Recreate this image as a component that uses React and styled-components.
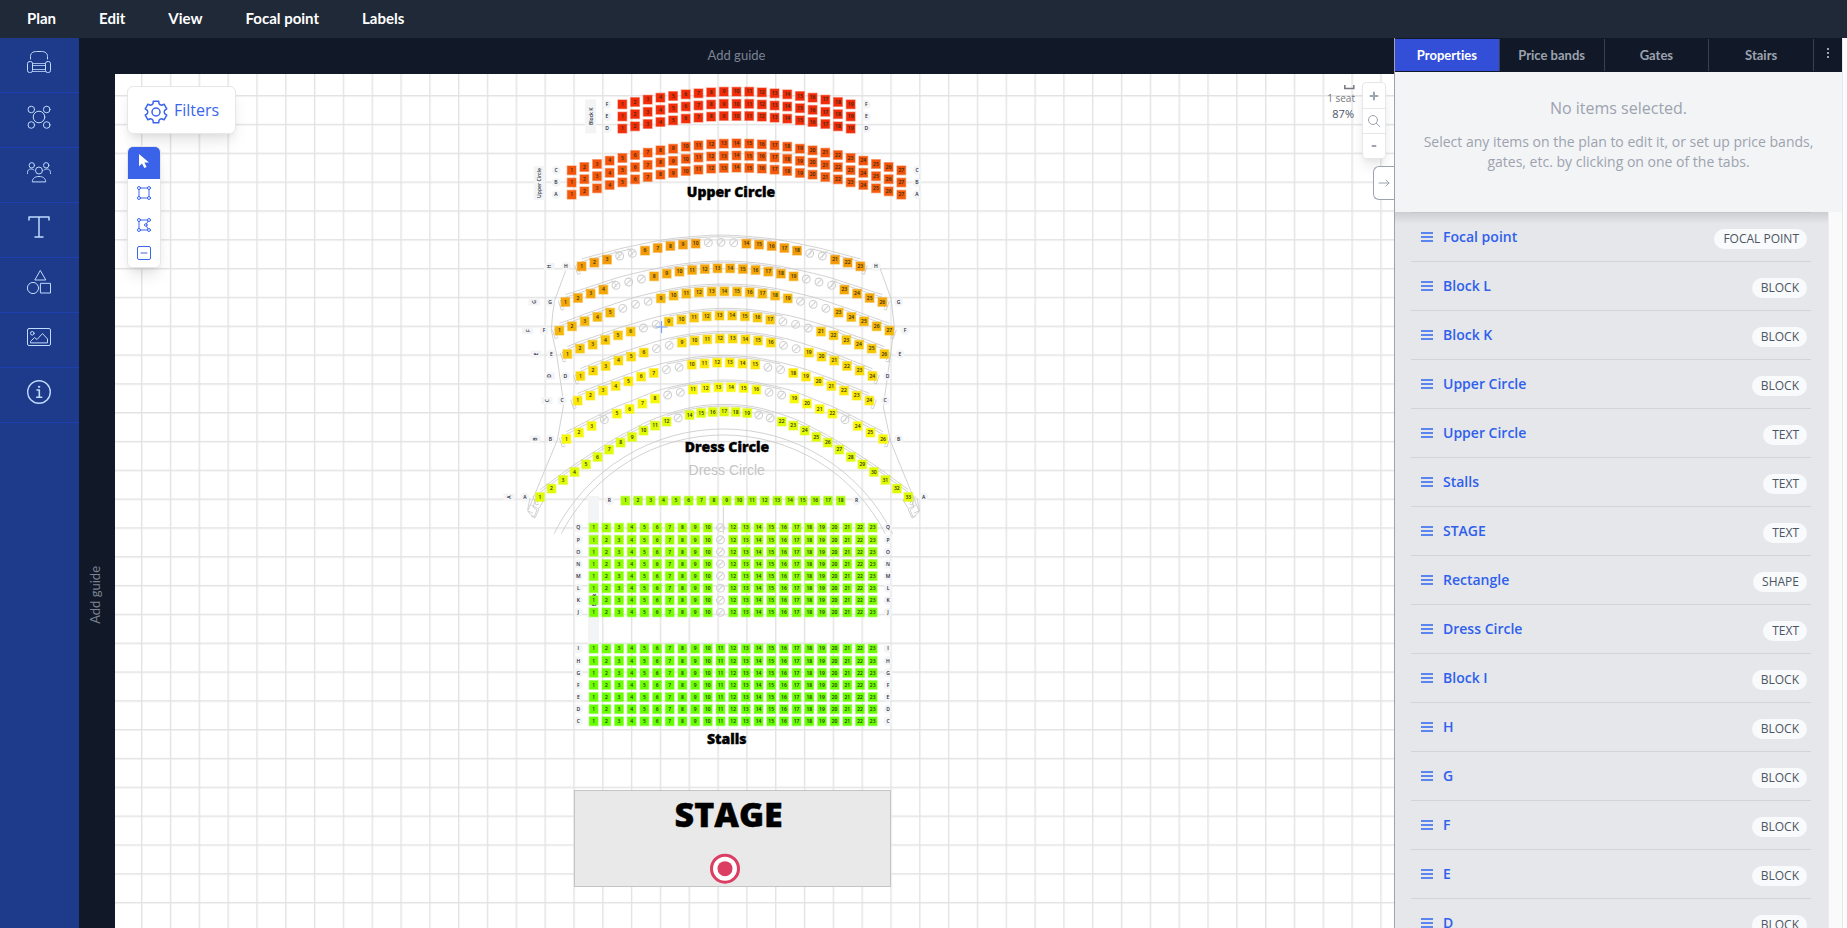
import React from "react";
import styled, { createGlobalStyle } from "styled-components";

const UI = `"Open Sans", "Noto Sans", sans-serif`;
const ROUND = `Lato, "Open Sans", sans-serif`;

const GlobalStyle = createGlobalStyle`
  *, *::before, *::after { box-sizing: border-box; }
  body { margin: 0; font-family: ${UI}; color: #4b5563; background: #fafafa; overflow: hidden; }
  button { font: inherit; color: inherit; background: none; border: 0; padding: 0; margin: 0; cursor: pointer; }
  ul, h2, p { margin: 0; padding: 0; list-style: none; }
  svg { display: block; }
`;

const Shell = styled.div`
  display: flex;
  flex-direction: column;
  height: 100vh;
`;

const MenuBar = styled.nav`
  display: flex;
  flex: none;
  height: 38px;
  padding: 0 5px;
  background: #1f2937;
`;

const MenuItem = styled.button`
  && {
    padding: 0 21px 2px 22px;
    font: 700 15px/20px ${ROUND};
    color: #fff;
  }
`;

const Body = styled.div`
  display: flex;
  flex: 1;
  min-height: 0;
`;

const Sidebar = styled.aside`
  flex: none;
  width: 79px;
  background: #1e3a8a;
`;

const SideTool = styled.button`
  && {
    display: flex;
    justify-content: center;
    align-items: flex-start;
    width: 100%;
    height: 55px;
    padding: 12px 1px 0 0;
    border-bottom: 1px solid #1e40af;
    color: #bfdbfe;
  }
`;

const Workspace = styled.main`
  display: flex;
  flex-direction: column;
  flex: 1;
  min-width: 0;
  background: #111827;
`;

const GuideTop = styled.button`
  && {
    flex: none;
    height: 36px;
    padding-bottom: 2px;
    font: 400 13px/16px ${ROUND};
    color: #7b8494;
  }
`;

const WorkRow = styled.div`
  display: flex;
  flex: 1;
  min-height: 0;
`;

const GuideLeft = styled.button`
  && {
    flex: none;
    width: 36px;
    padding: 190px 4px 0 0;
    font: 400 13px/16px ${ROUND};
    color: #7b8494;
    text-align: center;
  }
`;

const Vertical = styled.span`
  display: inline-block;
  writing-mode: vertical-rl;
  rotate: 180deg;
`;

const Canvas = styled.section`
  position: relative;
  flex: 1;
  min-width: 0;
  overflow: hidden;
  background: #fff;
`;

const PlanDrawing = styled.svg`
  width: 100%;
  height: 100%;
`;

const shadow = `0 10px 15px -3px rgba(0,0,0,.1), 0 4px 6px -2px rgba(0,0,0,.05)`;

const CanvasTools = styled.div`
  position: absolute;
  top: 12px;
  left: 12px;
  display: flex;
  flex-direction: column;
  align-items: flex-start;
  gap: 12px;
`;

const FilterButton = styled.button`
  && {
    display: flex;
    align-items: center;
    gap: 6px;
    width: 109px;
    height: 48px;
    padding-left: 16px;
    border: 1px solid #e5e7eb;
    border-radius: 6px;
    background: #fff;
    box-shadow: ${shadow};
    font-size: 16px;
    line-height: 24px;
    color: #3b66ea;
  }
  svg { margin-top: 3px; }
`;

const ToolStack = styled.div`
  display: flex;
  flex-direction: column;
  width: 34px;
  overflow: hidden;
  border: 1px solid #e5e7eb;
  border-radius: 6px;
  background: #fff;
  box-shadow: ${shadow};
`;

const ToolButton = styled.button`
  && {
    display: flex;
    justify-content: center;
    align-items: flex-start;
    height: ${(p) => (p.$compact ? 24 : 32)}px;
    padding-top: ${(p) => (p.$compact ? 3 : 7)}px;
    background: ${(p) => (p.$active ? "#3b63ea" : "#fff")};
    color: ${(p) => (p.$active ? "#fff" : "#3b66ea")};
  }
`;

const ViewTools = styled.div`
  position: absolute;
  top: 8px;
  right: 8px;
  display: flex;
  align-items: flex-start;
  gap: 7px;
`;

const Scale = styled.div`
  display: flex;
  flex-direction: column;
  align-items: flex-end;
  padding-top: 3px;
  color: #75787e;
  font-size: 10px;
  line-height: 16px;
  strong { font-size: 11px; font-weight: 500; color: #4b5563; line-height: 16px; padding-right: 1px; }
`;

const ZoomStack = styled.div`
  display: flex;
  flex-direction: column;
  width: 24px;
  border: 1px solid #e5e7eb;
  border-radius: 4px;
  background: #fff;
  box-shadow: ${shadow};
`;

const ZoomButton = styled.button`
  && {
    display: flex;
    align-items: center;
    justify-content: center;
    height: 25px;
    color: #9ca3af;
  }
  & + & { border-top: 1px solid #e5e7eb; }
`;

const CollapseButton = styled.button`
  && {
    position: absolute;
    top: 92px;
    right: 0;
    display: flex;
    align-items: center;
    justify-content: center;
    width: 21px;
    height: 34px;
    border: 1px solid #9ca3af;
    border-right: 0;
    border-radius: 6px 0 0 6px;
    background: #fff;
    color: #9ca3af;
  }
`;

const Panel = styled.aside`
  display: flex;
  flex: none;
  width: 453px;
  border-left: 1px solid #9ca3af;
  background: #fafafa;
`;

const PanelMain = styled.div`
  display: flex;
  flex-direction: column;
  flex: 1;
  min-width: 0;
`;

const PanelEdge = styled.div`
  flex: none;
  width: 5px;
  border-left: 1px solid #e5e7eb;
  background: #fdfdfd;
`;

const Tabs = styled.div`
  display: grid;
  grid-template-columns: repeat(4, 1fr) 28px;
  flex: none;
  height: 34px;
  padding: 1px 0;
  background: #111827;
`;

const Tab = styled.button`
  && {
    display: flex;
    align-items: center;
    justify-content: center;
    padding-bottom: 1px;
    border-right: 1px solid #374151;
    background: ${(p) => (p.$active ? "#334fd8" : "transparent")};
    color: ${(p) => (p.$active ? "#fff" : "#9ca3af")};
    font: 700 13px/20px ${ROUND};
    font-variant-ligatures: none;
  }
  &&:last-child { border-right: 0; padding: 0 1px 4px 0; }
`;

const Notice = styled.div`
  position: relative;
  z-index: 1;
  flex: none;
  height: 140px;
  padding: 24px 20px 0;
  background: #f3f4f6;
  color: #9ca3af;
  text-align: center;
  h2 { font-size: 16px; line-height: 24px; font-weight: 400; margin-bottom: 12px; }
  p { font-size: 14px; line-height: 20px; }
`;

const ListArea = styled.div`
  display: flex;
  flex: 1;
  min-height: 0;
`;

const ListScroll = styled.div`
  flex: 1;
  min-width: 0;
  overflow: hidden;
  padding: 0 17px 0 16px;
  background: linear-gradient(rgba(0,0,0,.11), rgba(0,0,0,0) 12px), #e5e7eb;
`;

const ScrollTrack = styled.div`
  flex: none;
  width: 14px;
  border-left: 1px solid #ececec;
  background: #fafafa;
`;

const ItemList = styled.ul`
  border-top: 1px solid #c3c6cc;
`;

const Item = styled.li`
  display: flex;
  align-items: center;
  gap: 10px;
  height: 49px;
  padding: 0 4px 0 10px;
  border-bottom: 1px solid #d1d5db;
`;

const Handle = styled.span`
  width: 12px;
  height: 10px;
  border-top: 2px solid #5b86f0;
  border-bottom: 2px solid #5b86f0;
  background: linear-gradient(#5b86f0, #5b86f0) center / 100% 2px no-repeat;
`;

const ItemName = styled.button`
  && {
    flex: 1;
    text-align: left;
    font-size: 14px;
    line-height: 20px;
    font-weight: 600;
    color: #2f60eb;
  }
`;

const Pill = styled.span`
  margin-top: 4px;
  padding: 0 8px 0 9px;
  border-radius: 10px;
  background: #f9fafb;
  font-size: 12px;
  font-weight: 500;
  line-height: 20px;
`;

/* ---------- icons ---------- */

const Line = ({ children, size = 24, width = 1, box = 24 }) => (
  <svg width={size} height={size} viewBox={`0 0 ${box} ${box}`} fill="none" stroke="currentColor" strokeWidth={width} strokeLinecap="round" strokeLinejoin="round" aria-hidden="true">
    {children}
  </svg>
);

const sideTools = [
  ["Seats", <><path d="M3.500 9V6.500C3.500 3 6 1.500 9.500 1.500h5c3.500 0 6 1.500 6 5V9" /><rect x=".5" y="11.500" width="5" height="11" rx="2" /><rect x="18.500" y="11.500" width="5" height="11" rx="2" /><path d="M5.500 13.500h13M5.500 15.500h13M5.500 19.500h13M5.500 21.500h13" opacity=".8" /></>],
  ["Tables", <><circle cx="12" cy="12" r="5.800" /><circle cx="4.300" cy="4.500" r="3.300" /><circle cx="19.700" cy="4.500" r="3.300" /><circle cx="4.300" cy="20" r="3.300" /><circle cx="19.700" cy="20" r="3.300" /></>],
  ["Areas", <><circle cx="12" cy="10.500" r="3.500" /><path d="M5.300 21.500c.2-3.500 3-5 6.700-5s6.500 1.500 6.700 5z" /><circle cx="4.800" cy="5.300" r="2.700" /><circle cx="19.200" cy="5.300" r="2.700" /><path d="M.5 13.500c-.2-3.500 1.500-4.500 3.500-4.500 1.300 0 2.200.3 3 1M23.500 13.500c.2-3.500-1.500-4.500-3.500-4.500-1.300 0-2.200.3-3 1" /></>],
  ["Text", <path strokeWidth="1.500" d="M2 5V2h20v3M12 2v20M8 22h8" />],
  ["Shapes", <><path d="M13.500.8l5.300 9.200H8.200z" /><circle cx="6" cy="18" r="5.600" /><rect x="13.800" y="13.300" width="9.700" height="9.700" /></>],
  ["Images", <><rect x=".5" y="3.500" width="23" height="17" rx="1.500" /><circle cx="5.300" cy="8.300" r="1.800" /><path d="M3.500 17.500v-1l4-4 2.500 2 5.500-6 5 5.500v3.500z" /></>],
  ["Information", <><circle cx="12" cy="12" r="11.300" strokeWidth="1.400" /><path strokeWidth="1.600" d="M10 10h2.300v7M9.700 17.300h5" /><circle cx="12" cy="6.800" r=".7" fill="currentColor" /></>],
];

const polar = (radius, degrees) => {
  const t = (degrees * Math.PI) / 180;
  return `${(12 + radius * Math.cos(t)).toFixed(2)} ${(12 + radius * Math.sin(t)).toFixed(2)}`;
};

const gearPath =
  "M" +
  [0, 1, 2, 3, 4, 5]
    .map((k) => {
      const t = -90 + 60 * k;
      return `${polar(8.8, t - 20)}L${polar(11.2, t - 14)}L${polar(11.2, t + 14)}L${polar(8.8, t + 20)}A3 3 0 0 0 ${polar(8.8, t + 40)}`;
    })
    .join("L") +
  "Z";

const Gear = () => (
  <Line width={1.5}>
    <path d={gearPath} />
    <circle cx="12" cy="12" r="4" />
  </Line>
);

const Corners = () => (
  <>
    <circle cx="2" cy="2" r="1.500" /><circle cx="12" cy="2" r="1.500" /><circle cx="2" cy="12" r="1.500" /><circle cx="12" cy="12" r="1.500" />
  </>
);

/* ---------- seat plan ---------- */

// Survey values are in thirds of a pixel, measured from the window's corner.
const ORIGIN = { x: 345, y: 221 };
const px = (v) => (v - ORIGIN.x) / 3;
const py = (v) => (v - ORIGIN.y) / 3;

const mirror = (half, count) =>
  Array.from({ length: count }, (_, i) => half[Math.min(i, count - 1 - i)]);

const span = (a, b) => Array.from({ length: b - a + 1 }, (_, i) => a + i);

const row = (name, color, first, last, ys, empty = [], labels, block) => ({ name, color, first, last, ys, empty, labels, block });

const rows = [];

const blockK = mirror([102, 95, 88, 82, 77, 72, 69, 66, 64, 64], 19);
["F", "E", "D"].forEach((name, r) =>
  rows.push(row(name, ["#f22a06", "#f22c08", "#f12d08"][r], 1867, 2552, blockK.map((y) => y + 210 + r * 36.5), [], [1821, 2599]))
);
const upper = mirror([300, 290, 281, 271, 263, 254, 247, 240, 235, 229, 225, 222, 220, 219], 27);
["C", "B", "A"].forEach((name, r) =>
  rows.push(row(name, ["#f35208", "#f4560a", "#f45a0b"][r], 1715, 2704, upper.map((y) => y + 210 + r * 36.5), [], [1668, 2751]))
);

const dress = [
  ["H", "#f39a08", 245, 1081, 23, [108, 97, 88, 77, 69, 61, 53, 47, 43, 40, 37, 36], [4, 5, 11, 12, 13, 19, 20], 198, 1128, 148],
  ["G", "#f4a609", 196, 1147, 26, [215, 203, 190, 178, 165, 155, 146, 138, 130, 124, 119, 116, 114], [5, 6, 7, 20, 21, 22], 150, 1196, 102],
  ["F", "#f5b608", 178, 1168, 27, [301, 288, 273, 260, 247, 234, 222, 213, 204, 196, 190, 186, 184, 183], [6, 7, 8, 20, 21, 22], 132, 1215, 83],
  ["E", "#f7c607", 202, 1153, 26, [371, 355, 343, 329, 315, 304, 293, 282, 274, 268, 262, 258, 256], [7, 8, 18, 19, 20], 154, 1200, 108],
  ["D", "#f9d906", 241, 1117, 24, [437, 421, 407, 391, 379, 367, 355, 345, 337, 331, 327, 325], [7, 8, 17, 18], 196, 1163, 148],
  ["C", "#fbe806", 233, 1108, 24, [511, 496, 481, 467, 453, 439, 428, 418, 411, 403, 400, 397], [8, 9, 16, 17], 186, 1155, 141],
  ["B", "#f7f808", 199, 1149, 26, [626, 607, 587, 568, 550, 536, 520, 505, 494, 486, 478, 473, 471], [4, 9, 10, 17, 18, 23], 151, 1196, 105],
  ["A", "#dffb05", 120, 1225, 33, [800, 775, 749, 725, 702, 680, 658, 637, 620, 601, 586, 574, 563, 554, 548, 545, 544], [13, 20, 21], 75, 1271, 27],
];
dress.forEach(([name, color, a, b, count, half, empty, l, r, block]) =>
  rows.push(row(name, color, a + 1500, b + 1500, mirror(half, count).map((y) => y + 690), empty, [l + 1500, r + 1500], block + 1500))
);

rows.push(row("R", "#a9fb04", 1876, 2522, Array(18).fill(1501), [], [1828, 2570]));
["Q", "P", "O", "N", "M", "L", "K", "J"].forEach((name, r) =>
  rows.push(row(name, `hsl(${82 + r * 1.5} 100% 50%)`, 1781, 2618, Array(23).fill(1582 + r * 36.3), [11], [1735, 2664]))
);
["I", "H", "G", "F", "E", "D", "C"].forEach((name, r) =>
  rows.push(row(name, `hsl(${94 + r * 0.4} 100% 50%)`, 1781, 2618, Array(23).fill(1945 + r * 36.3), [], [1735, 2664]))
);

const PlanText = styled.text`
  font-family: ${UI};
  font-size: 5px;
  font-weight: ${(p) => p.$weight || 600};
  fill: ${(p) => p.$fill || "#1f2937"};
  text-anchor: middle;
`;

const Title = styled.text`
  font-family: ${UI};
  font-size: ${(p) => p.$size}px;
  font-weight: 800;
  text-anchor: middle;
  fill: #000;
  stroke: #000;
  stroke-width: .4px;
`;

const GhostTitle = styled(Title)`
  font-family: "Liberation Sans", sans-serif;
  font-weight: 400;
  fill: #c4c4c4;
  stroke: none;
`;

const Seat = ({ x, y, n, color }) => (
  <g>
    <rect x={x - 5} y={y - 5} width="10" height="10" fill={color} opacity=".45" />
    <rect x={x - 4.3} y={y - 4.3} width="8.6" height="8.6" fill={color} />
    <PlanText x={x} y={y + 1.8} $fill="#2c2a10">{n}</PlanText>
  </g>
);

const EmptySeat = ({ x, y }) => (
  <g stroke="#d0d0d0" strokeWidth="1.100" fill="none">
    <circle cx={x} cy={y} r="3.900" />
    <path d={`M${x - 2.7} ${y + 2.7}L${x + 2.7} ${y - 2.7}`} />
  </g>
);

const RowLabel = ({ x, y, name }) => (
  <g>
    <circle cx={x} cy={y} r="4.500" fill="#f3f4f6" />
    <PlanText x={x} y={y + 1.8}>{name}</PlanText>
  </g>
);

const SeatRow = ({ data }) => {
  const { name, color, first, last, ys, empty, labels, block } = data;
  const step = (last - first) / (ys.length - 1);
  return (
    <g>
      {ys.map((y, i) => {
        const at = { x: px(first + step * i), y: py(y) };
        return empty.includes(i + 1) ? <EmptySeat key={i} {...at} /> : <Seat key={i} {...at} n={i + 1} color={color} />;
      })}
      {labels.map((x) => <RowLabel key={x} x={px(x)} y={py(ys[0])} name={name} />)}
      {block && (
        <g transform={`translate(${px(block)} ${py(ys[0])}) rotate(-90)`}>
          <rect x="-3.500" y="-5.500" width="7" height="11" fill="#f3f4f6" />
          <PlanText y="2">{name}</PlanText>
        </g>
      )}
    </g>
  );
};

const BlockTag = ({ x, y, length, children }) => (
  <g transform={`translate(${px(x)} ${py(y)}) rotate(-90)`}>
    <rect x={-length / 2} y="-5.500" width={length} height="11" fill="#f3f4f6" />
    <PlanText y="2">{children}</PlanText>
  </g>
);

const smooth = (points) =>
  points.map(([x, y], i) => {
    if (i === 0) return `M${x} ${y}`;
    const [a, b] = points[i - 1];
    return i === points.length - 1 ? `L${x} ${y}` : `Q${a} ${b} ${(a + x) / 2} ${(b + y) / 2}`;
  }).join("");

// Balcony fronts: a rail above each row, end caps, and short tread marks.
const Rails = () => (
  <g fill="none" stroke="#c6c6c6" strokeWidth=".8">
    {dress.map(([name, , a, b, count, half]) => {
      const ys = mirror(half, count);
      const step = (b - a) / (count - 1);
      const at = (i, up) => [px(1500 + a + step * i), py(690 + ys[i] - up)];
      const n = name === "A" ? 10 : 4;
      const mid = Math.floor(count / 2);
      const [lx, ly] = at(0, 0);
      const [rx, ry] = at(count - 1, 0);
      return (
        <g key={name}>
          <path d={smooth(ys.map((_, i) => at(i, 22)))} />
          <path d={smooth(span(0, n).map((i) => at(i, 14)))} />
          <path d={smooth(span(count - 1 - n, count - 1).map((i) => at(i, 14)))} />
          <path d={smooth(span(mid - 5, mid + 4).map((i) => at(i, 17)))} />
          {span(1, n).map((i) => {
            const [x, y] = at(i, 22);
            const [u, v] = at(count - 1 - i, 22);
            return <path key={i} d={`M${x - 5} ${y + 3}q4 0 5 6M${u + 5} ${v + 3}q-4 0-5 6`} />;
          })}
          <path d={`M${lx - 7} ${ly - 1}l3 9 3-1M${lx - 5} ${ly - 2}l3 8M${rx + 7} ${ry - 1}l-3 9-3-1M${rx + 5} ${ry - 2}l-3 8`} />
        </g>
      );
    })}
    <path d="M450.700 196.700L440 225.300l-2.300 14-1.400 16.700 5.400 25 6 41.700.6 10-6 33.300-29 70" />
    <path d="M765 194.300L776 224.300l3.300 28.400-5 36.600-6 43.400 7.400 35 28.600 70" />
    <path d="M415 424l-2 10q-1 3 1 5l5 4 3-7-4-3 3-8M413 437l5 2M416 431l8 4-4 9-4-2M422 421l7 5-5 8" />
    <path d="M802 424l2 10q1 3-1 5l-5 4-3-7 4-3-3-8M804 437l-5 2M801 431l-8 4 4 9 4-2M795 421l-7 5 5 8" />
    <path d={`M${px(1662)} ${py(1600)}A189.300 189.300 0 0 1 ${px(2678)} ${py(1600)}`} />
    <path d={`M${px(1684)} ${py(1600)}A182.300 182.300 0 0 1 ${px(2656)} ${py(1600)}`} />
    <path d={`M${px(2170)} ${py(1518)}V${py(1600)}`} />
  </g>
);

const SeatPlan = () => (
  <PlanDrawing role="img" aria-label="Seating plan">
    <defs>
      <pattern id="grid" x="26" y="21" width="28.820" height="28.820" patternUnits="userSpaceOnUse">
        <path d="M0 .7H28.820M.7 0V28.820" stroke="#e3e3e3" strokeWidth="1.400" />
      </pattern>
    </defs>
    <rect width="100%" height="100%" fill="url(#grid)" />
    <rect x={px(1764)} y={py(1487)} width="11" height="148" fill="#f3f4f6" />
    <Rails />
    <BlockTag x={1772} y={348} length={34}>Block K</BlockTag>
    <BlockTag x={1618} y={548} length={34}>Upper Circle</BlockTag>
    <BlockTag x={1782} y={1795} length={34}>Block I</BlockTag>
    {rows.map((r, i) => <SeatRow key={i} data={r} />)}
    <Title x={px(2193)} y={py(590)} $size={14}>Upper Circle</Title>
    <Title x={px(2181)} y={py(1356)} $size={14}>Dress Circle</Title>
    <GhostTitle x={px(2180)} y={py(1425)} $size={14}>Dress Circle</GhostTitle>
    <Title x={px(2180)} y={py(2231)} $size={14}>Stalls</Title>
    <rect x="459.500" y="716.500" width="316" height="96" fill="#e9e9e9" stroke="#c4c4c4" />
    <Title x={px(2186)} y={py(2481)} $size={34}>STAGE</Title>
    <circle cx={px(2175)} cy={py(2605)} r="13.500" fill="#fff" stroke="#dc3d62" strokeWidth="3" />
    <circle cx={px(2175)} cy={py(2605)} r="7.500" fill="#dc3d62" />
    <path d="M546.500 247v12M540.500 253h12" stroke="#7da2f3" strokeWidth="1.200" />
  </PlanDrawing>
);

/* ---------- page ---------- */

const items = [
  ["Focal point", "FOCAL POINT"],
  ["Block L", "BLOCK"],
  ["Block K", "BLOCK"],
  ["Upper Circle", "BLOCK"],
  ["Upper Circle", "TEXT"],
  ["Stalls", "TEXT"],
  ["STAGE", "TEXT"],
  ["Rectangle", "SHAPE"],
  ["Dress Circle", "TEXT"],
  ["Block I", "BLOCK"],
  ["H", "BLOCK"],
  ["G", "BLOCK"],
  ["F", "BLOCK"],
  ["E", "BLOCK"],
  ["D", "BLOCK"],
];

export default function App() {
  return (
    <Shell>
      <GlobalStyle />
      <MenuBar aria-label="Main menu">
        {["Plan", "Edit", "View", "Focal point", "Labels"].map((m) => <MenuItem key={m}>{m}</MenuItem>)}
      </MenuBar>
      <Body>
        <Sidebar aria-label="Tools">
          {sideTools.map(([label, drawing]) => (
            <SideTool key={label} aria-label={label}><Line>{drawing}</Line></SideTool>
          ))}
        </Sidebar>
        <Workspace>
          <GuideTop>Add guide</GuideTop>
          <WorkRow>
            <GuideLeft><Vertical>Add guide</Vertical></GuideLeft>
            <Canvas>
              <SeatPlan />
              <CanvasTools>
                <FilterButton><Gear /><span>Filters</span></FilterButton>
                <ToolStack>
                  <ToolButton $active aria-label="Select">
                    <svg width="14" height="14" viewBox="0 0 14 14" fill="currentColor" aria-hidden="true"><path d="M2 0v12.300l3-2.800 2.300 4.500 2.300-1.100-2.200-4.400H12z" /></svg>
                  </ToolButton>
                  <ToolButton aria-label="Rectangle selection">
                    <Line size={14} box={14}><Corners /><path d="M3.500 2h7M3.500 12h7M2 3.500v7M12 3.500v7" /></Line>
                  </ToolButton>
                  <ToolButton aria-label="Polygon selection">
                    <Line size={14} box={14}><Corners /><circle cx="8.800" cy="7" r="1.300" /><path d="M3.500 2h7M3.500 12h7M2 3.500v7M11 3.200L9.500 5.800M9.500 8.200l1.500 2.600" /></Line>
                  </ToolButton>
                  <ToolButton $compact aria-label="Deselect">
                    <Line size={14} box={14}><rect x=".5" y=".5" width="13" height="13" rx="1.500" /><path d="M4 7h6" /></Line>
                  </ToolButton>
                </ToolStack>
              </CanvasTools>
              <ViewTools>
                <Scale>
                  <svg width="11" height="5" viewBox="0 0 11 5" fill="none" stroke="currentColor" strokeWidth="1.500" aria-hidden="true"><path d="M.8 0v3.500h9V0" /></svg>
                  <span>1 seat</span>
                  <strong>87%</strong>
                </Scale>
                <ZoomStack>
                  <ZoomButton aria-label="Zoom in"><Line size={10} box={10} width={2}><path d="M5 1.500v7M1.500 5h7" /></Line></ZoomButton>
                  <ZoomButton aria-label="Reset zoom"><Line size={14} box={14}><circle cx="6" cy="6" r="4.500" /><path d="M9.300 9.300l3.500 3.500" /></Line></ZoomButton>
                  <ZoomButton aria-label="Zoom out"><Line size={10} box={10} width={2}><path d="M3.500 5h3" /></Line></ZoomButton>
                </ZoomStack>
              </ViewTools>
              <CollapseButton aria-label="Collapse panel">
                <Line size={12} box={12}><path d="M1 6h10M8 3l3 3-3 3" /></Line>
              </CollapseButton>
            </Canvas>
          </WorkRow>
        </Workspace>
        <Panel>
          <PanelMain>
            <Tabs role="tablist">
              {["Properties", "Price bands", "Gates", "Stairs"].map((t, i) => (
                <Tab key={t} role="tab" aria-selected={i === 0} $active={i === 0}>{t}</Tab>
              ))}
              <Tab aria-label="More">
                <svg width="2" height="10" viewBox="0 0 2 10" fill="currentColor" aria-hidden="true"><path d="M0 0h2v2H0zM0 4h2v2H0zM0 8h2v2H0z" /></svg>
              </Tab>
            </Tabs>
            <Notice>
              <h2>No items selected.</h2>
              <p>Select any items on the plan to edit it, or set up price bands, gates, etc. by clicking on one of the tabs.</p>
            </Notice>
            <ListArea>
              <ListScroll>
                <ItemList>
                  {items.map(([name, kind], i) => (
                    <Item key={i}>
                      <Handle />
                      <ItemName>{name}</ItemName>
                      <Pill>{kind}</Pill>
                    </Item>
                  ))}
                </ItemList>
              </ListScroll>
              <ScrollTrack />
            </ListArea>
          </PanelMain>
          <PanelEdge />
        </Panel>
      </Body>
    </Shell>
  );
}
